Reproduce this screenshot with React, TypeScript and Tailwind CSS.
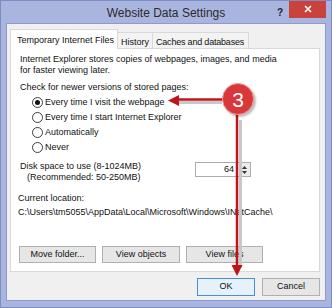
import React from "react";

const Radio = ({ checked }: { checked?: boolean }) => (
    <span className="w-[11px] h-[11px] rounded-full border border-[#3c3c3c] bg-white flex items-center justify-center shrink-0">
        {checked && <span className="w-[5px] h-[5px] rounded-full bg-[#111]" />}
    </span>
);

export default function App() {
    const options = [
        { label: "Every time I visit the webpage", checked: true },
        { label: "Every time I start Internet Explorer" },
        { label: "Automatically" },
        { label: "Never" },
    ];

    return (
        <div className="w-[332px] h-[308px] relative bg-[#aab5df] border border-[#7e8cc4] font-['Liberation_Sans',Arial,sans-serif] text-[9px] text-[#111] overflow-hidden">
            {/* Title bar */}
            <div className="h-[22px] relative flex items-center justify-center">
                <span className="text-[12px] text-[#2a2a2a] mt-[2px]">Website Data Settings</span>
                <span className="absolute left-[276px] top-[4px] text-[10px] font-bold text-[#222]">?</span>
                <div className="absolute left-[288px] -top-px w-[37px] h-[18px] bg-[#c9423c] flex items-center justify-center">
                    <svg width="8" height="8" viewBox="0 0 8 8">
                        <path d="M1 1 L7 7 M7 1 L1 7" stroke="#fff" strokeWidth="1.6" />
                    </svg>
                </div>
            </div>

            {/* Client area */}
            <div className="ml-[5px] w-[320px] h-[278px] border border-[#8f9bd0] bg-[#f0f0f0] pt-[5px] pl-[3px] pr-[5px]">
                {/* Tabs */}
                <div className="flex items-end h-[20px] whitespace-nowrap">
                    <div className="relative z-10 w-[108px] h-[20px] bg-white border border-b-0 border-[#d9d9d9] pl-[6px] pt-[4px] overflow-hidden">
                        Temporary Internet Files
                    </div>
                    <div className="w-[35px] h-[17px] bg-[#f3f3f3] border-t border-r border-[#d9d9d9] pl-[3px] pt-[3px] overflow-hidden">
                        History
                    </div>
                    <div className="w-[96px] h-[17px] bg-[#f3f3f3] border-t border-r border-[#d9d9d9] pl-[3px] pt-[3px] overflow-hidden tracking-[-0.2px]">
                        Caches and databases
                    </div>
                </div>

                {/* Tab panel */}
                <div className="relative -mt-px h-[224px] bg-white border border-[#d9d9d9] pt-[5px] pl-[9px]">
                    <p className="leading-[11px]">
                        Internet Explorer stores copies of webpages, images, and media
                        <br />
                        for faster viewing later.
                    </p>
                    <p className="mt-[6px] leading-[11px]">Check for newer versions of stored pages:</p>
                    <div className="mt-[2px] pl-[12px]">
                        {options.map((o) => (
                            <div key={o.label} className="h-[15px] flex items-center gap-[2px]">
                                <Radio checked={o.checked} />
                                <span>{o.label}</span>
                            </div>
                        ))}
                    </div>

                    <div className="mt-[6px] flex">
                        <div className="w-[175px] leading-[11px]">
                            <div>Disk space to use (8-1024MB)</div>
                            <div className="pl-[7px]">(Recommended: 50-250MB)</div>
                        </div>
                        <div className="mt-[1px] w-[56px] h-[15px] border border-[#acacac] bg-white flex">
                            <div className="flex-1 flex items-center justify-end pr-[5px]">64</div>
                            <div className="w-[11px] flex flex-col items-center justify-center gap-[2px] bg-[#ececec]">
                                <svg width="5" height="3" viewBox="0 0 5 3"><path d="M0 3 L2.5 0 L5 3Z" fill="#333" /></svg>
                                <svg width="5" height="3" viewBox="0 0 5 3"><path d="M0 0 L2.5 3 L5 0Z" fill="#333" /></svg>
                            </div>
                        </div>
                    </div>

                    <div className="-ml-[2px] mt-[10px] leading-[11px]">Current location:</div>
                    <div className="-ml-[2px] mt-[3px] leading-[11px]">
                        C:\Users\tm5055\AppData\Local\Microsoft\Windows\INetCache\
                    </div>

                    <div className="-ml-px mt-[28px] flex gap-[6px]">
                        <button className="w-[77px] h-[17px] bg-[#e6e6e6] border border-[#b0b0b0] flex items-center justify-center">Move folder...</button>
                        <button className="w-[78px] h-[17px] bg-[#e6e6e6] border border-[#b0b0b0] flex items-center justify-center">View objects</button>
                        <button className="w-[77px] h-[17px] bg-[#e6e6e6] border border-[#b0b0b0] flex items-center justify-center">View files</button>
                    </div>
                </div>

                {/* Dialog buttons */}
                <div className="mt-[6px] flex justify-end gap-[7px]">
                    <button className="w-[58px] h-[18px] bg-[#e5f1fb] border border-[#4a90d0] flex items-center justify-center">OK</button>
                    <button className="w-[58px] h-[18px] bg-[#e6e6e6] border border-[#b0b0b0] flex items-center justify-center">Cancel</button>
                </div>
            </div>

            {/* Annotation overlay */}
            <svg className="absolute -left-px -top-px pointer-events-none" width="332" height="308" viewBox="0 0 332 308">
                <path d="M178 102.5 H222" stroke="#c8c8c8" strokeWidth="3" />
                <path d="M240.5 120 V268" stroke="#c8c8c8" strokeWidth="3" />
                <path d="M176 99.5 H224" stroke="#c0141b" strokeWidth="2.5" />
                <polygon points="168,100.5 179,95 179,106" fill="#c0141b" />
                <path d="M237 114 V266" stroke="#c0141b" strokeWidth="2.5" />
                <polygon points="231.5,265 242.5,265 237,276" fill="#c0141b" />
            </svg>
            <div className="absolute left-[221px] top-[82px] w-[32px] h-[32px] rounded-full bg-[#d8383a] border border-[#ee9a9a] shadow-[2px_2px_2px_rgba(0,0,0,0.25)] flex items-center justify-center text-white text-[21px] leading-none">
                3
            </div>
        </div>
    );
}
